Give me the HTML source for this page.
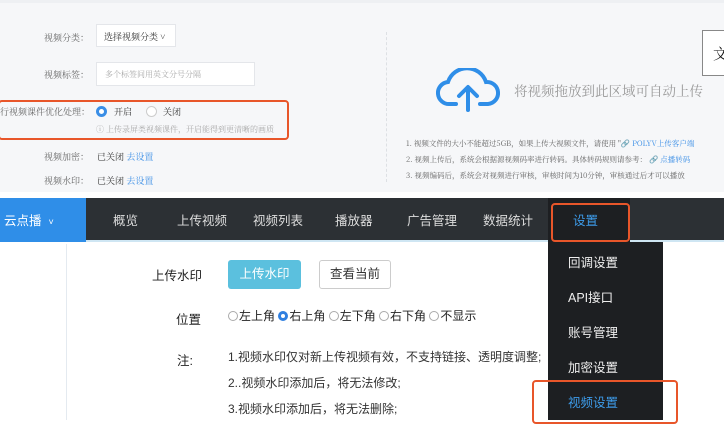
<!DOCTYPE html>
<html><head><meta charset="utf-8"><style>
*{margin:0;padding:0;box-sizing:border-box}
body{width:724px;height:420px;overflow:hidden;position:relative;background:#fff;font-family:"Liberation Sans","Noto Sans CJK SC",sans-serif}
.a{position:absolute;white-space:nowrap}
.top{position:absolute;left:0;top:0;width:724px;height:192px;background:#f6f7f9;border-top:3px solid #eef0f3}
.lbl{font-size:9px;color:#666;font-family:"Noto Serif CJK SC",serif}
.s{font-family:"Noto Serif CJK SC",serif}
.nav{position:absolute;left:0;top:198px;width:724px;height:44px;background:#2c3034;border-bottom:2px solid #cfe6f3}
.ni{position:absolute;top:12px;color:#ddd;font-size:12.5px}
.dd{position:absolute;left:548px;top:242px;width:115px;height:178px;background:#1d1f22}
.di{position:absolute;left:20px;color:#eee;font-size:12.5px}
.rb{position:absolute;border:2px solid #e8562a;border-radius:4px}
.rad{display:inline-block;width:10px;height:10px;border:1px solid #aaa;border-radius:50%;vertical-align:-1px;margin-right:1px}
</style></head><body>
<div class="top"></div>
<div class="a lbl" style="left:44px;top:31px">视频分类：</div>
<div class="a s" style="left:96px;top:24px;width:80px;height:23px;background:#fff;border:1px solid #e4e6ea;font-size:9px;color:#333;padding:5px 7px">选择视频分类 ˅</div>
<div class="a lbl" style="left:44px;top:68px">视频标签：</div>
<div class="a s" style="left:96px;top:62px;width:159px;height:24px;background:#fff;border:1px solid #e4e6ea;font-size:8px;color:#aaa;padding:6px 8px">多个标签间用英文分号分隔</div>
<div class="a lbl" style="left:0;top:105px">行视频课件优化处理：</div>
<div class="a" style="left:96px;top:106px;width:11px;height:11px;border-radius:50%;border:3px solid #3a8ee6;background:#fff"></div>
<div class="a s" style="left:114px;top:105px;font-size:9px;color:#333">开启</div>
<div class="a" style="left:146px;top:106px;width:11px;height:11px;border-radius:50%;border:1px solid #ccc;background:#fff"></div>
<div class="a s" style="left:163px;top:105px;font-size:9px;color:#333">关闭</div>
<div class="a s" style="left:96px;top:124px;font-size:8px;color:#aaa">ⓘ 上传录屏类视频课件，开启能得到更清晰的画质</div>
<div class="rb" style="left:-2px;top:100px;width:291px;height:40px"></div>
<div class="a lbl" style="left:44px;top:150px">视频加密：</div>
<div class="a s" style="left:97px;top:150px;font-size:9px;color:#333">已关闭 <span style="color:#3a8ee6">去设置</span></div>
<div class="a lbl" style="left:44px;top:174px">视频水印：</div>
<div class="a s" style="left:97px;top:174px;font-size:9px;color:#333">已关闭 <span style="color:#3a8ee6">去设置</span></div>
<div class="a" style="left:386px;top:32px;height:150px;border-left:1px dashed #dde0e4"></div>
<svg class="a" style="left:436px;top:68px" width="64" height="44" viewBox="0 0 64 44"><path d="M20 36H14A11 11 0 0 1 12 14 A20 20 0 0 1 50 14 A11 11 0 0 1 52 36H44" fill="none" stroke="#2f8ee8" stroke-width="4" stroke-linecap="round"/><path d="M32 42V20M23 28l9-9 9 9" fill="none" stroke="#2f8ee8" stroke-width="4" stroke-linecap="round" stroke-linejoin="round"/></svg>
<div class="a s" style="left:514px;top:80px;font-size:13.5px;color:#999">将视频拖放到此区域可自动上传</div>
<div class="a s" style="left:406px;top:136px;font-size:7.5px;color:#666;line-height:16px">1. 视频文件的大小不能超过5GB，如果上传大视频文件，请使用 "<span style="color:#3a8ee6">🔗 POLYV上传客户端</span><br>2. 视频上传后，系统会根据源视频码率进行转码。具体转码规则请参考： <span style="color:#3a8ee6">🔗 点播转码</span><br>3. 视频编码后，系统会对视频进行审核，审核时间为10分钟，审核通过后才可以播放</div>
<div class="a s" style="left:702px;top:30px;width:30px;height:46px;background:#fff;border:1px solid #888;font-size:15px;padding:12px 10px;color:#111">文</div>
<div class="nav">
<div class="a" style="left:0;top:0;width:86px;height:44px;background:#2f8ee8;color:#fff;font-size:12.5px;padding:12px 4px">云点播 &nbsp;<span style="font-size:9px">˅</span></div>
<div class="ni" style="left:113px">概览</div>
<div class="ni" style="left:177px">上传视频</div>
<div class="ni" style="left:253px">视频列表</div>
<div class="ni" style="left:335px">播放器</div>
<div class="ni" style="left:407px">广告管理</div>
<div class="ni" style="left:483px">数据统计</div>
<div class="a" style="left:548px;top:0;width:82px;height:44px;background:#1d1f22"></div>
<div class="ni" style="left:573px;color:#3d9be9">设置</div>
</div>
<div class="rb" style="left:551px;top:203px;width:79px;height:39px"></div>
<div class="a" style="left:66px;top:244px;width:500px;height:176px;border-left:1px solid #e4eaf0;background:#fff"></div>
<div class="a" style="left:152px;top:265px;font-size:12.5px;color:#222">上传水印</div>
<div class="a" style="left:228px;top:260px;width:73px;height:29px;background:#5bc0de;border-radius:3px;color:#fff;font-size:12.5px;text-align:center;line-height:29px">上传水印</div>
<div class="a" style="left:319px;top:260px;width:72px;height:29px;border:1px solid #ccc;border-radius:3px;color:#333;font-size:12.5px;text-align:center;line-height:27px">查看当前</div>
<div class="a" style="left:176px;top:309px;font-size:12.5px;color:#222">位置</div>
<div class="a" style="left:228px;top:307px;font-size:12px;color:#222"><span class="rad"></span>左上角 <span class="rad" style="border:3px solid #2f7fe0"></span>右上角 <span class="rad"></span>左下角 <span class="rad"></span>右下角 <span class="rad"></span>不显示</div>
<div class="a" style="left:177px;top:350px;font-size:12.5px;color:#222">注:</div>
<div class="a" style="left:228px;top:344px;font-size:12px;color:#333;line-height:26px">1.视频水印仅对新上传视频有效，不支持链接、透明度调整;<br>2..视频水印添加后，将无法修改;<br>3.视频水印添加后，将无法删除;</div>
<div class="dd">
<div class="di" style="top:10px">回调设置</div>
<div class="di" style="top:45px">API接口</div>
<div class="di" style="top:80px">账号管理</div>
<div class="di" style="top:115px">加密设置</div>
<div class="di" style="top:150px;color:#3d9be9">视频设置</div>
</div>
<div class="rb" style="left:532px;top:380px;width:146px;height:44px"></div>
</body></html>
